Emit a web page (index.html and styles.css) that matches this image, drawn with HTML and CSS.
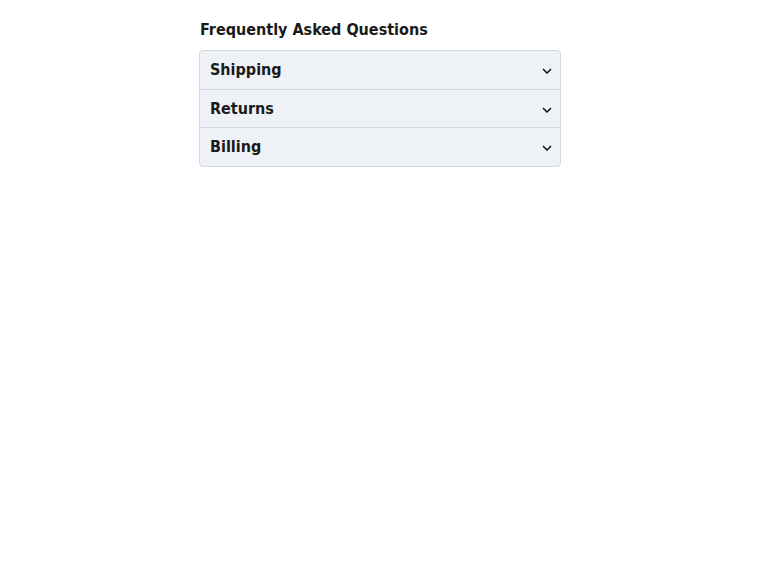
FILE: index.html
```html
<!DOCTYPE html>
<html lang="en">
<head>
  <meta charset="UTF-8">
  <meta name="viewport" content="width=device-width, initial-scale=1.0">
  <title>FAQ</title>
  <link rel="stylesheet" href="styles.css">
</head>
<body>
  <main class="faq">
    <h2 class="faq-title">Frequently Asked Questions</h2>

    <div class="accordion">
      <button class="accordion-item" type="button">
        <span>Shipping</span>
        <svg class="chevron" width="10" height="6" viewBox="0 0 10 6"><path d="M1 1l4 4 4-4" fill="none" stroke="#111" stroke-width="1.5"/></svg>
      </button>
      <button class="accordion-item" type="button">
        <span>Returns</span>
        <svg class="chevron" width="10" height="6" viewBox="0 0 10 6"><path d="M1 1l4 4 4-4" fill="none" stroke="#111" stroke-width="1.5"/></svg>
      </button>
      <button class="accordion-item" type="button">
        <span>Billing</span>
        <svg class="chevron" width="10" height="6" viewBox="0 0 10 6"><path d="M1 1l4 4 4-4" fill="none" stroke="#111" stroke-width="1.5"/></svg>
      </button>
    </div>
  </main>
</body>
</html>
```

FILE: styles.css
```css
/* FAQ accordion */
body {
  margin: 0;
  font-family: "DejaVu Sans Condensed", "DejaVu Sans", sans-serif;
  color: #1a1a1a;
  background: #fff;
}

.faq {
  width: 362px;
  margin: 0 auto;
  padding-top: 20px;
}

.faq-title {
  font-size: 16px;
  font-weight: bold;
  margin: 0 0 11px 1px;
  line-height: 19px;
}

.accordion {
  display: flex;
  flex-direction: column;
  border: 1px solid #d4d8de;
  border-radius: 4px;
  background: #eef1f6;
  overflow: hidden;
}

.accordion-item {
  display: flex;
  justify-content: space-between;
  align-items: center;
  width: 100%;
  margin: 0;
  padding: 9px 10px;
  border: none;
  background: transparent;
  font-family: inherit;
  font-size: 16px;
  font-weight: bold;
  line-height: 19.5px;
  color: inherit;
  text-align: left;
  cursor: pointer;
}

.accordion-item + .accordion-item {
  border-top: 1px solid #d4d8de;
}

.chevron {
  margin-top: 3px;
  margin-right: -2px;
}
```
